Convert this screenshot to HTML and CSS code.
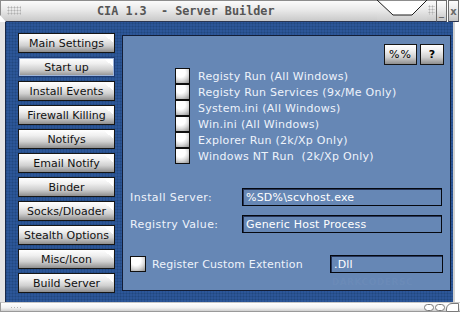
FILE: index.html
```html
<!DOCTYPE html>
<html>
<head>
<meta charset="utf-8">
<title>CIA 1.3 - Server Builder</title>
<link rel="stylesheet" href="styles.css">
</head>
<body>
<div class="window">
  <div class="titlebar">
    <div class="tab">
      <span class="grip"></span>
      <span class="title">CIA 1.3&nbsp; - Server Builder</span>
    </div>
    <svg class="notch" width="50" height="22" viewBox="0 0 50 22">
      <defs>
        <linearGradient id="tg" x1="0" y1="0" x2="0" y2="1">
          <stop offset="0" stop-color="#fbfbfb"/>
          <stop offset="0.45" stop-color="#e9e9e9"/>
          <stop offset="1" stop-color="#c9c9c9"/>
        </linearGradient>
      </defs>
      <rect x="0" y="0" width="50" height="22" fill="url(#tg)"/>
      <polygon points="0,0 16,15 35,15 50,0" fill="#ffffff" stroke="#1c1c1c" stroke-width="1"/>
      <line x1="0" y1="21.5" x2="50" y2="21.5" stroke="#2a3550" stroke-width="1"/>
    </svg>
    <div class="tab-end"><span class="grip small"></span></div>
    <div class="ctl">_</div>
    <div class="ctl">x</div>
  </div>

  <div class="frame">
    <div class="nav">
      <div class="nbtn">Main Settings</div>
      <div class="nbtn active">Start up</div>
      <div class="nbtn">Install Events</div>
      <div class="nbtn">Firewall Killing</div>
      <div class="nbtn">Notifys</div>
      <div class="nbtn">Email Notify</div>
      <div class="nbtn">Binder</div>
      <div class="nbtn">Socks/Dloader</div>
      <div class="nbtn">Stealth Options</div>
      <div class="nbtn">Misc/Icon</div>
      <div class="nbtn">Build Server</div>
    </div>

    <div class="panel">
      <div class="watermark">DARKCODERSC</div>
      <div class="tools">
        <div class="tbtn pct">%%</div>
        <div class="tbtn help">?</div>
      </div>
      <div class="checks">
        <div class="check"><span class="box"></span><span>Registy Run (All Windows)</span></div>
        <div class="check"><span class="box"></span><span>Registy Run Services (9x/Me Only)</span></div>
        <div class="check"><span class="box"></span><span>System.ini (All Windows)</span></div>
        <div class="check"><span class="box"></span><span>Win.ini (All Windows)</span></div>
        <div class="check"><span class="box"></span><span>Explorer Run (2k/Xp Only)</span></div>
        <div class="check"><span class="box"></span><span>Windows NT Run&nbsp; (2k/Xp Only)</span></div>
      </div>
      <div class="field first">
        <span class="flabel">Install Server:</span>
        <span class="input">%SD%\scvhost.exe</span>
      </div>
      <div class="field second">
        <span class="flabel">Registry Value:</span>
        <span class="input">Generic Host Process</span>
      </div>
      <div class="reg">
        <span class="box big"></span>
        <span class="rlabel">Register Custom Extention</span>
        <span class="input small">.Dll</span>
      </div>
    </div>
  </div>

  <div class="bottom">
    <span class="grip tiny"></span>
    <span class="spacer"></span>
    <span class="pill"></span>
    <span class="pill"></span>
    <span class="corner"></span>
  </div>
</div>
</body>
</html>
```
FILE: styles.css
```css
* { box-sizing: border-box; }
html, body { margin: 0; padding: 0; background: #ffffff; }
body { font-family: "DejaVu Sans", Verdana, sans-serif; }

.window {
  width: 460px;
  height: 312px;
  display: flex;
  flex-direction: column;
}

/* ---------- title bar ---------- */
.titlebar {
  height: 22px;
  display: flex;
}
.tab {
  flex: 1;
  display: flex;
  align-items: center;
  background: linear-gradient(#fbfbfb, #e9e9e9 45%, #c9c9c9);
  border-top: 1px solid #8c8c8c;
  border-left: 1px solid #8c8c8c;
  border-bottom: 1px solid #2a3550;
  clip-path: polygon(0 0, 100% 0, 100% 100%, 6px 100%, 0 15px);
}
.grip {
  width: 14px;
  height: 9px;
  margin-left: 6px;
  margin-top: -2px;
  background-image: radial-gradient(circle, #b0b0b0 0.9px, transparent 1.1px);
  background-size: 3px 3px;
}
.grip.small { width: 7px; height: 10px; margin-left: 1px; }
.title {
  margin-left: 76px;
  font-family: "DejaVu Sans Mono", monospace;
  font-weight: bold;
  font-size: 11.8px;
  color: #555555;
  white-space: pre;
}
.tab-end {
  width: 9px;
  display: flex;
  align-items: center;
  background: linear-gradient(#fbfbfb, #e9e9e9 45%, #c9c9c9);
  border-top: 1px solid #8c8c8c;
  border-bottom: 1px solid #2a3550;
}
.ctl {
  width: 11px;
  margin-right: 1px;
  display: flex;
  align-items: center;
  justify-content: center;
  background: linear-gradient(#fdfdfd, #e6e6e6 50%, #c4c4c4);
  border: 1px solid #6d6d6d;
  border-bottom-color: #2a3550;
  font-size: 10px;
  font-weight: bold;
  color: #6a6a6a;
}

/* ---------- blue frame ---------- */
.frame {
  height: 280px;
  display: flex;
  gap: 7px;
  padding: 11px 2px 0 13px;
  margin-right: 5px;
  border-left: 5px solid #e4e4e4;
  border-right: 2px solid #d2d2d2;
  box-shadow: inset 1px 0 #1a2948;
  background-color: #2c5698;
  background-image: radial-gradient(circle, #21487f 0.8px, transparent 1.2px);
  background-size: 3px 3px;
}

.nav {
  width: 97px;
  display: flex;
  flex-direction: column;
  gap: 4px;
}
.nbtn {
  position: relative;
  height: 20px;
  display: flex;
  align-items: center;
  justify-content: center;
  border: 1px solid #161616;
  background: linear-gradient(#ffffff, #f0f0f0 30%, #cfcfcf 65%, #8e8e8e);
  font-size: 11px;
  color: #111111;
  white-space: nowrap;
}
.nbtn::after {
  content: "";
  position: absolute;
  right: 1px;
  top: 1px;
  width: 9px;
  height: 7px;
  background: linear-gradient(to bottom left, #ffffff 50%, rgba(255,255,255,0) 50%);
}
.nbtn.active {
  border-color: #1d3a73;
  box-shadow: inset 0 0 0 1px #9db6dc;
}

/* ---------- main panel ---------- */
.panel {
  position: relative;
  flex: 1;
  margin-top: 2px;
  height: 256px;
  display: flex;
  flex-direction: column;
  padding: 8px 6px 0 7px;
  background: #6687b5;
  border: 1px solid #121d36;
  color: #eef3fb;
  font-size: 11px;
}
.watermark {
  position: absolute;
  right: 37px;
  bottom: 3px;
  font-size: 9px;
  font-weight: bold;
  letter-spacing: 0.5px;
  color: rgba(255,255,255,0.045);
}
.tools {
  display: flex;
  justify-content: flex-end;
  gap: 3px;
  height: 21px;
}
.tbtn {
  height: 21px;
  display: flex;
  align-items: center;
  justify-content: center;
  border: 1px solid #161616;
  background: linear-gradient(#ffffff, #f0f0f0 30%, #cfcfcf 65%, #8e8e8e);
  color: #000000;
  font-size: 11px;
}
.tbtn.pct { width: 33px; letter-spacing: 1px; }
.tbtn.help { width: 24px; font-weight: bold; }

.checks {
  margin: 3px 0 0 45px;
  display: flex;
  flex-direction: column;
  letter-spacing: 0.28px;
}
.check {
  height: 16px;
  display: flex;
  align-items: center;
  gap: 8px;
  white-space: pre;
}
.box {
  width: 15px;
  height: 16px;
  flex: none;
  border: 1px solid #101010;
  background: radial-gradient(circle at 35% 25%, #ffffff 35%, #dcdcdc 60%, #9a9a9a 95%);
}
.box.big { width: 16px; height: 16px; }

.field {
  display: flex;
  align-items: center;
  height: 18px;
}
.field.first { margin-top: 24px; }
.field.second { margin-top: 9px; }
.flabel {
  width: 112px;
  letter-spacing: 0.4px;
}
.input {
  width: 200px;
  height: 18px;
  display: flex;
  align-items: center;
  padding-left: 3px;
  border: 1px solid #05080f;
  box-shadow: inset 1px 1px #26365a;
  color: #ffffff;
  font-size: 11px;
  letter-spacing: 0.2px;
}
.input.small { width: 113px; }

.reg {
  margin-top: 22px;
  height: 18px;
  display: flex;
  align-items: center;
}
.rlabel {
  width: 178px;
  margin-left: 6px;
  letter-spacing: 0.15px;
}

/* ---------- bottom bar ---------- */
.bottom {
  height: 10px;
  display: flex;
  align-items: center;
  background: linear-gradient(#ffffff, #f2f2f2 60%, #cfcfcf);
  border-top: 1px solid #c8c8c8;
  border-left: 1px solid #9a9a9a;
  border-bottom: 1px solid #9a9a9a;
}
.grip.tiny {
  width: 12px;
  height: 3px;
  margin-left: 9px;
  margin-top: 0;
  background-image: radial-gradient(circle, #b5b5b5 0.8px, transparent 1px);
  background-size: 3px 3px;
}
.spacer { flex: 1; }
.pill {
  width: 10px;
  height: 7px;
  margin-right: 1px;
  border: 1px solid #7a7a7a;
  border-radius: 4px;
  background: #ffffff;
}
.corner {
  width: 13px;
  height: 9px;
  margin-right: 1px;
  border: 1px solid #7a7a7a;
  border-radius: 6px 0 0 0;
  background: #ffffff;
}
```
